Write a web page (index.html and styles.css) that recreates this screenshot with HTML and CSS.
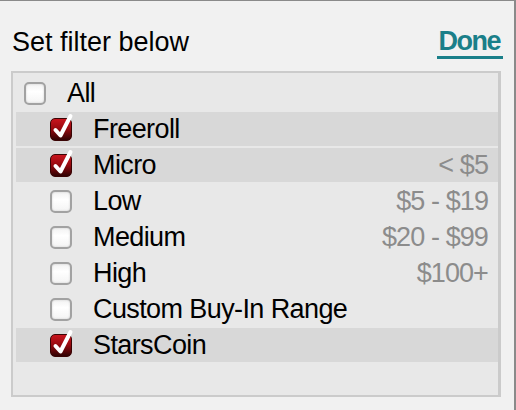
FILE: index.html
```html
<!DOCTYPE html>
<html>
<head>
<meta charset="utf-8">
<link rel="stylesheet" href="styles.css">
</head>
<body>
<div class="frame">
  <div class="header">
    <span class="title">Set filter below</span>
    <span class="done">Done</span>
  </div>
  <div class="panel">
    <div class="row top">
      <span class="cb"></span><span class="label">All</span>
    </div>
    <div class="row sel">
      <span class="cb on"><svg viewBox="0 0 22 22" width="22" height="22"><path d="M4.5 11 L9.5 16.5 L19.5 -3" /></svg></span><span class="label">Freeroll</span>
    </div>
    <div class="row sel">
      <span class="cb on"><svg viewBox="0 0 22 22" width="22" height="22"><path d="M4.5 11 L9.5 16.5 L19.5 -3" /></svg></span><span class="label">Micro</span><span class="val">&lt; $5</span>
    </div>
    <div class="row">
      <span class="cb"></span><span class="label">Low</span><span class="val">$5 - $19</span>
    </div>
    <div class="row">
      <span class="cb"></span><span class="label">Medium</span><span class="val">$20 - $99</span>
    </div>
    <div class="row">
      <span class="cb"></span><span class="label">High</span><span class="val">$100+</span>
    </div>
    <div class="row">
      <span class="cb"></span><span class="label">Custom Buy-In Range</span>
    </div>
    <div class="row sel">
      <span class="cb on"><svg viewBox="0 0 22 22" width="22" height="22"><path d="M4.5 11 L9.5 16.5 L19.5 -3" /></svg></span><span class="label">StarsCoin</span>
    </div>
  </div>
</div>
</body>
</html>
```
FILE: styles.css
```css
* { box-sizing: border-box; }
html, body { margin: 0; padding: 0; }
body {
  width: 516px;
  height: 410px;
  background: #f1f1f1;
  font-family: "Liberation Sans", Arial, sans-serif;
  color: #000;
  overflow: hidden;
}
.frame {
  width: 516px;
  height: 410px;
  border-top: 1px solid #8a8a8a;
  border-right: 2px solid #8a8a8a;
}
.header {
  display: flex;
  justify-content: space-between;
  align-items: flex-end;
  padding: 25px 11px 0 12px;
  height: 70px;
}
.title {
  font-size: 27px;
  line-height: 30px;
  margin-bottom: 14px;
}
.done {
  font-size: 27px;
  font-weight: bold;
  line-height: 30px;
  color: #1a7f89;
  letter-spacing: -1.5px;
  padding: 0 3px 0 2px;
  border-bottom: 3px solid #1a7f89;
  margin-bottom: 12px;
}
.panel {
  margin-left: 11px;
  width: 490px;
  height: 326px;
  border: 2px solid #cbcbcb;
  border-right-width: 3px;
  background: #e8e8e8;
  padding: 3px 0 0 3px;
  display: flex;
  flex-direction: column;
  gap: 2px;
}
.row {
  height: 34px;
  display: flex;
  align-items: center;
  padding: 0 10px 0 34px;
  font-size: 27px;
  letter-spacing: -0.6px;
}
.row.top { padding-left: 8px; }
.row.sel { background: #d8d8d8; }
.cb {
  width: 22px;
  height: 23px;
  flex: none;
  margin-right: 21px;
  border: 2px solid #a2a2a2;
  border-radius: 5px;
  background: linear-gradient(#f2f2f2, #ffffff 40%, #f4f4f4);
  box-shadow: inset 0 0 2px #c8c8c8;
  position: relative;
}
.cb.on {
  border: 1px solid #3a0404;
  background: linear-gradient(#c8141d, #9a0a10 45%, #300203);
  box-shadow: none;
}
.cb svg {
  position: absolute;
  left: 0;
  top: 0;
  overflow: visible;
}
.cb svg path {
  fill: none;
  stroke: #fff;
  stroke-width: 4;
  stroke-linecap: round;
  stroke-linejoin: round;
}
.label { flex: 1; }
.val {
  color: #8c8c8c;
  letter-spacing: -0.9px;
}
```
